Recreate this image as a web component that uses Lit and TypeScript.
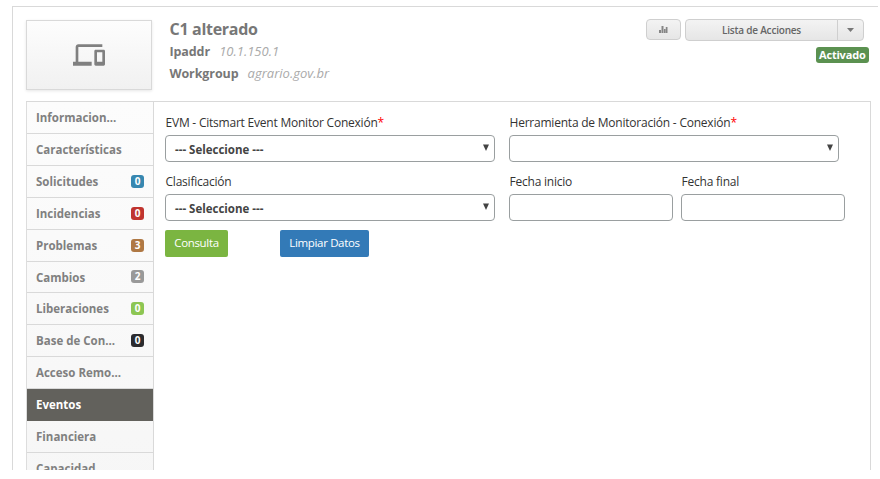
import { LitElement, html, css, svg } from "lit";
import { customElement, property } from "lit/decorators.js";
import { classMap } from "lit/directives/class-map.js";

interface MenuEntry {
  label: string;
  count?: number;
  tone?: string;
  active?: boolean;
  short?: boolean;
}

const MENU: MenuEntry[] = [
  { label: "Informacion..." },
  { label: "Características" },
  { label: "Solicitudes", count: 0, tone: "blue" },
  { label: "Incidencias", count: 0, tone: "red" },
  { label: "Problemas", count: 3, tone: "brown" },
  { label: "Cambios", count: 2, tone: "gray", short: true },
  { label: "Liberaciones", count: 0, tone: "green" },
  { label: "Base de Con...", count: 0, tone: "black" },
  { label: "Acceso Remo..." },
  { label: "Eventos", active: true },
  { label: "Financiera" },
  { label: "Capacidad" },
];

@customElement("ci-header")
class CiHeader extends LitElement {
  static styles = css`
    :host { display: flex; height: 81px; }
    .thumb {
      box-sizing: border-box; width: 126px; height: 70px;
      border: 1px solid #d9d9d9; background: linear-gradient(#fdfdfd, #f1f1f1);
      box-shadow: 0 1px 3px rgba(0, 0, 0, 0.1);
      display: flex; align-items: center; justify-content: center;
    }
    .thumb svg { width: 32px; height: 32px; fill: #808080; }
    .info { flex: 1; padding-left: 17.5px; color: #777; }
    .name { font-size: 16px; line-height: 18px; font-weight: 700; color: #777; letter-spacing: -0.3px; }
    .line { height: 22px; line-height: 22px; font-size: 12.5px; font-weight: 700; white-space: nowrap; letter-spacing: -0.1px; }
    .line.first { margin-top: 2px; }
    .line i { font-size: 13px; font-weight: 400; color: #aaa; margin-left: 6px; letter-spacing: 0; }
    .side { display: flex; flex-direction: column; align-items: flex-end; }
    .actions { display: flex; margin-top: -1px; margin-right: 6px; }
    .btn {
      box-sizing: border-box; height: 22px; border: 1px solid #cfcfcf; border-radius: 4px;
      background: linear-gradient(#f3f3f3, #e6e6e6); color: #666;
      display: flex; align-items: center; justify-content: center;
      font-size: 10px; font-weight: 600; letter-spacing: -0.2px;
    }
    .chart { width: 35px; height: 21px; margin-right: 4px; }
    .chart svg { width: 9px; height: 7px; fill: #858585; }
    .list { width: 153px; border-radius: 4px 0 0 4px; padding-bottom: 1px; }
    .more { width: 27px; margin-left: -1px; border-radius: 0 4px 4px 0; }
    .more svg { width: 7px; height: 4px; fill: #777; }
    .status {
      margin-top: 6px; margin-right: 1px; height: 16px; line-height: 16px; padding: 0 3.5px;
      border-radius: 3px; background: #5b9150; color: #fff; font-size: 11px; font-weight: 700;
      letter-spacing: -0.2px;
    }
  `;
  render() {
    return html`
      <div class="thumb">
        <svg viewBox="0 0 24 24">
          <path d="M4 6h18V4H4c-1.1 0-2 .9-2 2v11H0v3h14v-3H4V6zm19 2h-6c-.55 0-1 .45-1 1v10c0 .55.45 1 1 1h6c.55 0 1-.45 1-1V9c0-.55-.45-1-1-1zm-1 9h-4v-7h4v7z" />
        </svg>
      </div>
      <div class="info">
        <div class="name">C1 alterado</div>
        <div class="line first">Ipaddr <i>10.1.150.1</i></div>
        <div class="line">Workgroup <i>agrario.gov.br</i></div>
      </div>
      <div class="side">
        <div class="actions">
          <div class="btn chart">
            <svg viewBox="0 0 9 7"><path d="M0 4h2v3H0zM2.5 0h2v7h-2zM5 3h1.5v4H5zM6.8 1h1.7v6H6.8z" /></svg>
          </div>
          <div class="btn list">Lista de Acciones</div>
          <div class="btn more"><svg viewBox="0 0 7 4"><path d="M0 0h7L3.5 4z" /></svg></div>
        </div>
        <div class="status">Activado</div>
      </div>
    `;
  }
}

@customElement("ci-menu")
class CiMenu extends LitElement {
  static styles = css`
    :host {
      display: block; box-sizing: border-box; width: 128px;
      border-left: 1px solid #ddd; border-right: 1px solid #d9d9d9;
      background: linear-gradient(#fcfcfc, #f6f6f6);
    }
    .item {
      box-sizing: border-box; height: 32px; border-bottom: 1px solid #d9d9d9;
      display: flex; align-items: center; justify-content: space-between;
      padding: 0 9px 0; font-size: 11.5px; font-weight: 700; color: #808080;
    }
    .short { height: 31px; }
    .active { background: #62615c; color: #fff; border-bottom-color: #62615c; }
    .badge {
      width: 13px; height: 13px; line-height: 13px; border-radius: 3px;
      text-align: center; font-size: 10px; color: #fff; margin-top: -1px;
    }
    .blue { background: #3787b0; }
    .red { background: #c0342f; }
    .brown { background: #af7844; }
    .gray { background: #999; }
    .green { background: #8dc653; }
    .black { background: #2b2b2e; }
  `;
  render() {
    return MENU.map(
      (m) => html`
        <div class=${classMap({ item: true, active: !!m.active, short: !!m.short })}>
          <span>${m.label}</span>
          ${m.count === undefined ? "" : html`<span class="badge ${m.tone}">${m.count}</span>`}
        </div>
      `
    );
  }
}

@customElement("form-field")
class FormField extends LitElement {
  @property() label = "";
  @property() value = "";
  @property({ type: Boolean }) required = false;
  @property({ type: Boolean }) select = false;
  static styles = css`
    :host { display: block; }
    .label {
      height: 19px; line-height: 19px; padding-left: 0.5px; font-size: 12px;
      letter-spacing: -0.22px; color: #333; white-space: nowrap;
    }
    .star { color: #f00; }
    .box {
      box-sizing: border-box; height: 27px; margin-top: 3px; border: 1px solid #9a9fa0;
      border-radius: 4px; background: #fff; display: flex; align-items: center;
      justify-content: space-between; padding: 2px 5px 0 9px;
      font-size: 11.5px; font-weight: 700; color: #444;
    }
    svg { width: 6px; height: 7px; fill: #444; margin-top: -4px; }
  `;
  render() {
    return html`
      <div class="label">${this.label}${this.required ? html`<span class="star">*</span>` : ""}</div>
      <div class="box">
        <span>${this.value}</span>
        ${this.select ? html`<svg viewBox="0 0 6 7">${svg`<path d="M0 0.5h6L3 7z" />`}</svg>` : ""}
      </div>
    `;
  }
}

@customElement("app-root")
class AppRoot extends LitElement {
  static styles = css`
    :host {
      display: block; width: 880px; height: 479px; background: #fff; overflow: hidden;
      font-family: "Open Sans", "Noto Sans", sans-serif;
    }
    .frame {
      box-sizing: border-box; margin: 0 2px 0 12px; height: 464px; overflow: hidden;
      border-left: 1px solid #d9d9d9; border-top: 1px solid #d9d9d9; padding: 13px 7px 0 13px;
    }
    .space { height: 6px; }
    ci-header { margin-right: 1px; }
    .body { display: flex; height: 400px; border: solid #d9d9d9; border-width: 1px 1px 0 0; }
    .form { flex: 1; padding: 11px 0 0 11px; }
    .row { display: flex; }
    .row + .row { margin-top: 10px; }
    .main { width: 330px; margin-right: 14px; }
    .wide { width: 330px; }
    .date { width: 164px; margin-right: 8px; }
    .buttons { display: flex; margin-top: 9px; gap: 52px; }
    .button {
      height: 27px; line-height: 26px; border-radius: 2px; text-align: center;
      font-size: 11.5px; color: #fff; letter-spacing: -0.35px;
    }
    .go { width: 63px; background: #7bb541; }
    .clear { width: 89px; background: #337ab7; }
  `;
  render() {
    return html`
      <div class="space"></div>
      <div class="frame">
        <ci-header></ci-header>
        <div class="body">
          <ci-menu></ci-menu>
          <div class="form">
            <div class="row">
              <form-field class="main" label="EVM - Citsmart Event Monitor Conexión" value="--- Seleccione ---" required select></form-field>
              <form-field class="wide" label="Herramienta de Monitoración - Conexión" required select></form-field>
            </div>
            <div class="row">
              <form-field class="main" label="Clasificación" value="--- Seleccione ---" select></form-field>
              <form-field class="date" label="Fecha inicio"></form-field>
              <form-field class="date" label="Fecha final"></form-field>
            </div>
            <div class="buttons">
              <div class="button go">Consulta</div>
              <div class="button clear">Limpiar Datos</div>
            </div>
          </div>
        </div>
      </div>
    `;
  }
}
